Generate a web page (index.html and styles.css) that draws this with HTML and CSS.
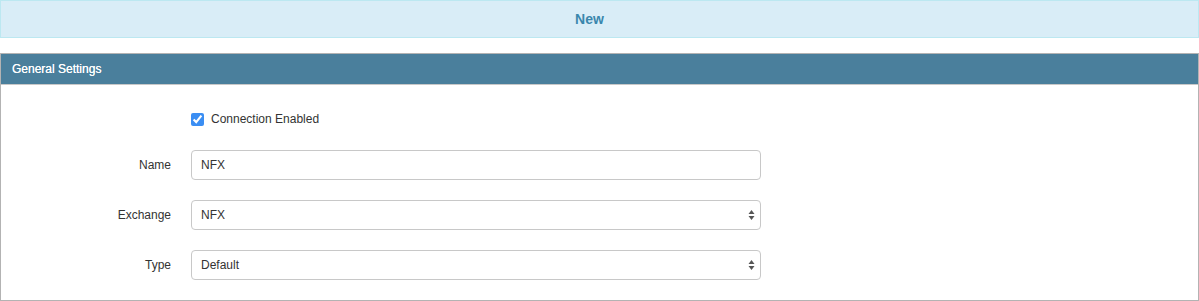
FILE: index.html
```html
<!DOCTYPE html>
<html lang="en">
<head>
    <meta charset="UTF-8">
    <title>New Connection</title>
    <link rel="stylesheet" href="styles.css">
</head>
<body>
    <div class="alert-info">New</div>

    <div class="panel">
        <div class="panel-heading">General Settings</div>
        <form class="panel-body">
            <div class="check-row">
                <label class="check-label">
                    <input type="checkbox" class="check-input" checked>
                    <span>Connection Enabled</span>
                </label>
            </div>

            <div class="form-row">
                <label class="field-label" for="name">Name</label>
                <input type="text" id="name" class="field-input" value="NFX">
            </div>

            <div class="form-row">
                <label class="field-label" for="exchange">Exchange</label>
                <div class="select-wrap">
                    <select id="exchange" class="field-input">
                        <option>NFX</option>
                    </select>
                    <svg class="select-arrows" width="7" height="12" viewBox="0 0 7 12">
                        <path d="M3.5 1 L6.5 5 L0.5 5 Z M3.5 11 L6.5 7 L0.5 7 Z" fill="#555"/>
                    </svg>
                </div>
            </div>

            <div class="form-row">
                <label class="field-label" for="type">Type</label>
                <div class="select-wrap">
                    <select id="type" class="field-input">
                        <option>Default</option>
                    </select>
                    <svg class="select-arrows" width="7" height="12" viewBox="0 0 7 12">
                        <path d="M3.5 1 L6.5 5 L0.5 5 Z M3.5 11 L6.5 7 L0.5 7 Z" fill="#555"/>
                    </svg>
                </div>
            </div>
        </form>
    </div>
</body>
</html>
```

FILE: styles.css
```css
* {
    margin: 0;
    padding: 0;
    box-sizing: border-box;
}

body {
    font-family: 'Liberation Sans', Arial, sans-serif;
    font-size: 12px;
    color: #333;
    background-color: white;
    width: 1199px;
}

.alert-info {
    height: 38px;
    line-height: 36px;
    margin-bottom: 15px;
    padding-right: 20px;
    background-color: #d9edf7;
    border: 1px solid #bce8f1;
    color: #3a87ad;
    font-size: 14px;
    font-weight: 700;
    text-align: center;
}

.panel {
    border: 1px solid #b3b3b3;
    height: 248px;
}

.panel-heading {
    height: 31px;
    line-height: 30px;
    padding-left: 11px;
    background-color: #4a7f9c;
    border-bottom: 1px solid #c8c8c8;
    color: white;
    text-shadow: 0 0 0.4px white;
}

.panel-body {
    padding: 24px 0 19px;
    display: flex;
    flex-direction: column;
    gap: 20px;
}

.check-row {
    height: 20px;
    padding-left: 190px;
    margin-bottom: 1px;
    display: flex;
    align-items: center;
}

.check-label {
    display: flex;
    align-items: center;
    gap: 7px;
}

.check-input {
    width: 13px;
    height: 13px;
    accent-color: #3b8ef3;
    margin: 0;
}

.form-row {
    display: grid;
    grid-template-columns: 170px 570px;
    column-gap: 20px;
    align-items: center;
    height: 30px;
}

.field-label {
    text-align: right;
}

.field-input {
    width: 570px;
    height: 30px;
    padding: 0 9px;
    border: 1px solid #c8c8c8;
    border-radius: 4px;
    background-color: white;
    font-family: inherit;
    font-size: 12px;
    color: #333;
    appearance: none;
    outline: none;
}

.select-wrap {
    position: relative;
    width: 570px;
}

.select-arrows {
    position: absolute;
    right: 6px;
    top: 9px;
    pointer-events: none;
}
```
